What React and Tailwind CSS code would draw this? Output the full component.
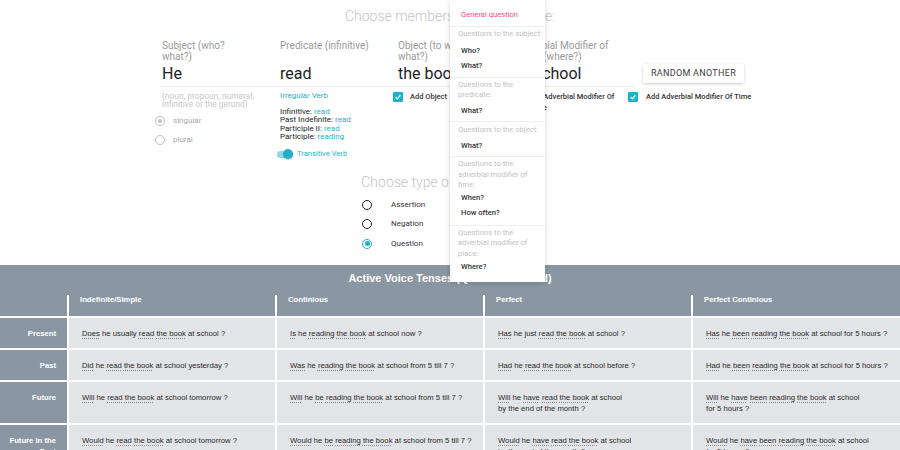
import React from 'react';

// sentence segments in [brackets] get the dotted underline
const rows = [
  {
    label: 'Present',
    cells: [
      '[Does] he usually [read] [the book] at school ?',
      '[Is] he [reading] [the book] at school now ?',
      '[Has] he just [read] [the book] at school ?',
      '[Has] he [been] [reading] [the book] at school for 5 hours ?',
    ],
  },
  {
    label: 'Past',
    cells: [
      '[Did] he [read] [the book] at school yesterday ?',
      '[Was] he [reading] [the book] at school from 5 till 7 ?',
      '[Had] he [read] [the book] at school before ?',
      '[Had] he [been] [reading] [the book] at school for 5 hours ?',
    ],
  },
  {
    label: 'Future',
    cells: [
      '[Will] he [read] [the book] at school tomorrow ?',
      '[Will] he [be] [reading] [the book] at school from 5 till 7 ?',
      '[Will] he [have] [read] [the book] at school\nby the end of the month ?',
      '[Will] he [have] [been] [reading] [the book] at school\nfor 5 hours ?',
    ],
  },
  {
    label: 'Future in the Past',
    cells: [
      '[Would] he [read] [the book] at school tomorrow ?',
      '[Would] he [be] [reading] [the book] at school from 5 till 7 ?',
      '[Would] he [have] [read] [the book] at school\nby the end of the month ?',
      '[Would] he [have] [been] [reading] [the book] at school\nfor 5 hours ?',
    ],
  },
];

const Sentence = ({ text }) => (
  <>
    {text.split('\n').map((line, li) => (
      <div key={li}>
        {line.split(/(\[[^\]]+\])/).map((part, i) =>
          part.startsWith('[') ? (
            <span key={i} className="underline decoration-dotted decoration-[#8c8c8c] underline-offset-[2px]">
              {part.slice(1, -1)}
            </span>
          ) : (
            <span key={i}>{part}</span>
          )
        )}
      </div>
    ))}
  </>
);

const Checkbox = () => (
  <span className="w-[10px] h-[10px] rounded-[1px] bg-[#1fb1ca] flex items-center justify-center shrink-0">
    <svg width="8" height="8" viewBox="0 0 10 10">
      <path d="M2 5.2 L4.2 7.3 L8 2.8" stroke="white" strokeWidth="1.6" fill="none" />
    </svg>
  </span>
);

const Field = ({ label, value, narrow, children }) => (
  <div className="w-[118px] shrink-0">
    <div className={`h-[21px] text-[10px] leading-[10.5px] text-[#9a9a9a] ${narrow ? 'w-[91px]' : 'w-[106px]'}`}>{label}</div>
    <div className="mt-[2px] h-[23px] border-b border-[#ececec] text-[16px] leading-[20px] text-[#222] whitespace-nowrap">
      {value}
    </div>
    {children}
  </div>
);

const Dropdown = () => (
  <div className="absolute left-[450px] top-0 w-[95px] bg-white shadow-[0_1px_5px_rgba(0,0,0,0.18)] z-10 font-['Roboto',sans-serif] text-[7.6px]">
    <div className="pt-[10px] pb-[6px] pl-[11px] leading-[10px] text-[#ec4f7f] border-b border-[#eeeeee]">General question</div>

    <div className="pt-[2px] pb-[4px] border-b border-[#eeeeee]">
      <div className="pl-[8px] leading-[10px] text-[#c2c2c2] mb-[4px]">Questions to the subject:</div>
      <div className="pl-[11px] h-[15px] flex items-center font-medium text-[#333]">Who?</div>
      <div className="pl-[11px] h-[15px] flex items-center font-medium text-[#333]">What?</div>
    </div>

    <div className="pt-[2px] pb-[3px] border-b border-[#eeeeee]">
      <div className="pl-[8px] pr-[20px] leading-[10px] text-[#c2c2c2] mb-[3px]">Questions to the predicate:</div>
      <div className="pl-[11px] h-[15px] flex items-center font-medium text-[#333]">What?</div>
    </div>

    <div className="pt-[3px] pb-[3px] border-b border-[#eeeeee]">
      <div className="pl-[8px] leading-[10px] text-[#c2c2c2] mb-[3px]">Questions to the object:</div>
      <div className="pl-[11px] h-[15px] flex items-center font-medium text-[#333]">What?</div>
    </div>

    <div className="pt-[2px] pb-[4px] border-b border-[#eeeeee]">
      <div className="pl-[8px] pr-[14px] leading-[10.5px] text-[#c2c2c2]">Questions to the adverbial modifier of time:</div>
      <div className="pl-[11px] h-[15px] flex items-center font-medium text-[#333]">When?</div>
      <div className="pl-[11px] h-[15px] flex items-center font-medium text-[#333]">How often?</div>
    </div>

    <div className="pt-[2px] pb-[8px]">
      <div className="pl-[8px] pr-[14px] leading-[10.5px] text-[#c2c2c2]">Questions to the adverbial modifier of place:</div>
      <div className="pl-[11px] h-[15px] flex items-center font-medium text-[#333]">Where?</div>
    </div>
  </div>
);

export default function App() {
  return (
    <div className="relative w-[900px] h-[450px] overflow-hidden bg-white">
      <Dropdown />

      {/* Sentence builder */}
      <div className="h-[265px] font-['Roboto',sans-serif]">
        <h2 className="pt-[6px] h-[26px] text-center text-[14px] leading-[20px] font-light text-[#c4c4c4]">
          Choose members of the sentence:
        </h2>

        <div className="mt-[15px] h-[124px] flex pl-[162px]">
          <Field label="Subject (who? what?)" value="He" narrow>
            <div className="mt-[5px] pr-[20px] text-[8.4px] leading-[8px] text-[#c8c8c8]">
              (noun, propoun, numeral, infinitive or the gerund)
            </div>
            <div className="mt-[3.5px] -ml-[7px]">
              <div className="h-[19px] flex items-center gap-[8px]">
                <span className="w-[10px] h-[10px] rounded-full border border-[#bdbdbd] flex items-center justify-center">
                  <span className="w-[4px] h-[4px] rounded-full bg-[#bdbdbd]" />
                </span>
                <span className="text-[8px] text-[#a8a8a8]">singular</span>
              </div>
              <div className="h-[19px] flex items-center gap-[8px]">
                <span className="w-[10px] h-[10px] rounded-full border border-[#bdbdbd]" />
                <span className="text-[8px] text-[#a8a8a8]">plural</span>
              </div>
            </div>
          </Field>

          <Field label="Predicate (infinitive)" value="read">
            <div className="mt-[4px] text-[8px] leading-[10px] text-[#1fb1ca]">Irregular Verb</div>
            <div className="mt-[6.5px] text-[8px] leading-[8.5px] text-[#222]">
              <div>Infinitive: <span className="text-[#1fb1ca]">read</span></div>
              <div>Past Indefinite: <span className="text-[#1fb1ca]">read</span></div>
              <div>Participle II: <span className="text-[#1fb1ca]">read</span></div>
              <div>Participle: <span className="text-[#1fb1ca]">reading</span></div>
            </div>
            <div className="mt-[6.5px] h-[12px] -ml-[3px] flex items-center gap-[4px]">
              <span className="w-[16px] h-[7px] rounded-full bg-[#8fd6e2] flex items-center justify-end">
                <span className="w-[10px] h-[10px] rounded-full bg-[#1fb1ca] shadow-[0_1px_1px_rgba(0,0,0,0.2)]" />
              </span>
              <span className="text-[7.6px] text-[#1fb1ca]">Transitive Verb</span>
            </div>
          </Field>

          <Field label="Object (to whom? what?)" value="the book">
            <div className="mt-[4px] -ml-[5px] h-[12px] flex items-center gap-[7px]">
              <Checkbox />
              <span className="text-[7.5px] font-medium text-[#333]">Add Object</span>
            </div>
          </Field>

          <Field label="Adverbial Modifier of Place (where?)" value="at school">
            <div className="mt-[4px] -ml-[5px] flex items-start gap-[7px]">
              <span className="mt-[1px]"><Checkbox /></span>
              <span className="w-[90px] text-[7.5px] leading-[11px] font-medium text-[#333]">Add Adverbial Modifier Of Place</span>
            </div>
          </Field>

          <div className="w-[118px] shrink-0">
            <div className="h-[21px]" />
            <div className="mt-[2px] h-[23px] pl-[9px]">
              <button className="block w-[101px] h-[19px] bg-white text-[9px] tracking-[0.3px] text-[#3a3a3a] shadow-[0_1px_3px_rgba(0,0,0,0.2)] rounded-[1px]">
                RANDOM ANOTHER
              </button>
            </div>
            <div className="mt-[4px] -ml-[6px] h-[12px] flex items-center gap-[8px] whitespace-nowrap">
              <Checkbox />
              <span className="text-[7.5px] font-medium text-[#333]">Add Adverbial Modifier Of Time</span>
            </div>
          </div>
        </div>

        <h2 className="mt-[7px] h-[20px] text-center text-[14px] leading-[20px] font-light text-[#c4c4c4]">
          Choose type of the sentence:
        </h2>
        <div className="mt-[3px] pl-[362px]">
          {['Assertion', 'Negation', 'Question'].map((t) => (
            <div key={t} className="h-[19.5px] flex items-center gap-[19px]">
              {t === 'Question' ? (
                <span className="w-[10px] h-[10px] rounded-full border border-[#1fb1ca] flex items-center justify-center">
                  <span className="w-[5px] h-[5px] rounded-full bg-[#1fb1ca]" />
                </span>
              ) : (
                <span className="w-[10px] h-[10px] rounded-full border border-[#222]" />
              )}
              <span className="text-[8px] text-[#333]">{t}</span>
            </div>
          ))}
        </div>
      </div>

      {/* Tenses table */}
      <div className="bg-white font-['Liberation_Sans',Arial,sans-serif]">
        <div className="bg-[#8b96a3]">
          <div className="h-[27px] flex items-center justify-center text-[11px] font-bold text-white">
            Active Voice Tenses (Question — read)
          </div>
          <div className="h-[24px] grid grid-cols-[67px_208px_208px_208px_1fr]">
            <div />
            {['Indefinite/Simple', 'Continious', 'Perfect', 'Perfect Continious'].map((h) => (
              <div key={h} className="mt-[3px] border-l-2 border-white pl-[11px] text-[7.7px] leading-[10px] font-bold text-white">
                {h}
              </div>
            ))}
          </div>
        </div>

        <div className="mt-[2px] grid grid-cols-[67px_206px_206px_206px_1fr] gap-[2px]">
          {rows.map((r) => (
            <React.Fragment key={r.label}>
              <div className="bg-[#8b96a3] pt-[10px] pb-[9px] pl-[6px] pr-[11px] text-right text-[7.7px] leading-[11px] font-bold text-white">
                {r.label}
              </div>
              {r.cells.map((c, i) => (
                <div key={i} className="bg-[#e2e4e7] pt-[10px] pb-[9px] pl-[13px] text-[7.7px] leading-[11px] text-[#2a2a2a]">
                  <Sentence text={c} />
                </div>
              ))}
            </React.Fragment>
          ))}
        </div>
      </div>
    </div>
  );
}
